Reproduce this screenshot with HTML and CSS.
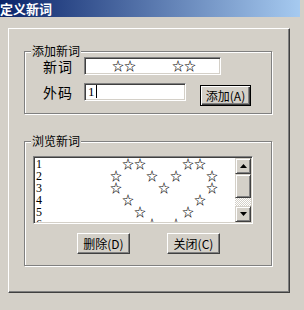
FILE: index.html
```html
<!DOCTYPE html>
<html lang="zh-CN">
<head>
  <meta charset="UTF-8">
  <title>定义新词</title>
  <link rel="stylesheet" href="styles.css">
</head>
<body>
  <div class="titlebar">定义新词</div>

  <div class="frame">
    <!-- 添加新词 -->
    <div class="group group-add">
      <span class="legend">添加新词</span>
      <div class="row">
        <span class="label">新词</span>
        <div class="field field-word stars">☆☆　　　☆☆</div>
      </div>
      <div class="row">
        <span class="label">外码</span>
        <div class="field field-code">1<span class="caret"></span></div>
        <button class="btn btn-default">添加(A)</button>
      </div>
    </div>

    <!-- 浏览新词 -->
    <div class="group group-browse">
      <span class="legend">浏览新词</span>
      <div class="listbox">
        <div class="list-rows">
          <div class="list-row"><span class="num">1</span><span class="stars">　☆☆　　　☆☆</span></div>
          <div class="list-row"><span class="num">2</span><span class="stars">☆　　☆　☆　　☆</span></div>
          <div class="list-row"><span class="num">3</span><span class="stars">☆　　　☆　　　☆</span></div>
          <div class="list-row"><span class="num">4</span><span class="stars">　☆　　　　　☆</span></div>
          <div class="list-row"><span class="num">5</span><span class="stars">　　☆　　　☆</span></div>
          <div class="list-row"><span class="num">6</span><span class="stars">　　　☆　☆</span></div>
          <div class="list-row"><span class="num">7</span><span class="stars">　　　　☆</span></div>
        </div>
        <div class="scrollbar">
          <div class="sb-btn">
            <svg width="7" height="4" viewBox="0 0 7 4"><polygon points="3.5,0 7,4 0,4" fill="#000"/></svg>
          </div>
          <div class="sb-thumb"></div>
          <div class="sb-track"></div>
          <div class="sb-btn">
            <svg width="7" height="4" viewBox="0 0 7 4"><polygon points="0,0 7,0 3.5,4" fill="#000"/></svg>
          </div>
        </div>
      </div>
      <div class="actions">
        <button class="btn">删除(D)</button>
        <button class="btn">关闭(C)</button>
      </div>
    </div>
  </div>
</body>
</html>
```

FILE: styles.css
```css
body {
  margin: 0;
  width: 304px;
  height: 310px;
  overflow: hidden;
  background: #d4d0c8;
  color: #000;
  font-family: "Noto Sans CJK SC", sans-serif;
  font-size: 12px;
}

.titlebar {
  height: 17px;
  line-height: 17px;
  margin-right: 4px;
  background: linear-gradient(to right, #0a246a, #a6caf0);
  color: #fff;
  font-size: 13px;
  font-weight: bold;
  white-space: nowrap;
}

.frame {
  box-sizing: border-box;
  width: 282px;
  height: 265px;
  margin: 11px 0 0 8px;
  padding: 22px 0 0 15px;
  border: 1px solid;
  border-color: #fff #404040 #404040 #fff;
  box-shadow: inset -1px -1px 0 #808080;
}

/* etched group box */
.group {
  box-sizing: border-box;
  width: 248px;
  border: 1px solid #808080;
  box-shadow: inset 1px 1px 0 #fff, 1px 1px 0 #fff;
  padding-left: 6px;
}
.legend {
  display: block;
  width: fit-content;
  height: 14px;
  line-height: 14px;
  margin-top: -8px;
  padding: 0 1px;
  background: #d4d0c8;
}

.group-add { padding-bottom: 12px; }
.group-add .legend { margin-bottom: -1px; }
.row {
  display: flex;
  align-items: center;
  height: 18px;
  padding-left: 12px;
}
.row + .row { margin-top: 8px; }
.label {
  width: 41px;
  font-size: 14px;
  letter-spacing: 1px;
}

/* sunken edit field */
.field {
  box-sizing: border-box;
  height: 18px;
  line-height: 16px;
  background: #fff;
  border: 1px solid;
  border-color: #808080 #fff #fff #808080;
  box-shadow: inset 1px 1px 0 #404040, inset -1px -1px 0 #d4d0c8;
  white-space: nowrap;
  overflow: hidden;
}
.field-word { width: 137px; padding-left: 27px; }
.field-code {
  width: 102px;
  padding-left: 3px;
  font-family: "Liberation Serif", serif;
  font-size: 13px;
}
.caret {
  display: inline-block;
  width: 1px;
  height: 13px;
  margin-left: 1px;
  vertical-align: -2px;
  background: #000;
}

.btn {
  box-sizing: border-box;
  width: 53px;
  height: 21px;
  padding: 0;
  background: #d4d0c8;
  color: #000;
  font-family: "Noto Sans CJK SC", sans-serif;
  font-size: 12px;
  border: 1px solid;
  border-color: #fff #404040 #404040 #fff;
  box-shadow: inset -1px -1px 0 #808080;
}
.btn-default {
  width: 51px;
  align-self: flex-start;
  margin: 2px 0 0 14px;
  border-color: #000;
  box-shadow: inset 1px 1px 0 #fff, inset -1px -1px 0 #404040, inset -2px -2px 0 #808080;
}

.group-browse {
  margin-top: 27px;
  padding-bottom: 11px;
}
.group-browse .legend { margin-bottom: 8px; }

.listbox {
  box-sizing: border-box;
  display: flex;
  width: 220px;
  height: 68px;
  margin-left: 2px;
  padding: 1px;
  background: #fff;
  border: 1px solid;
  border-color: #808080 #fff #fff #808080;
  box-shadow: inset 1px 1px 0 #404040, inset -1px -1px 0 #d4d0c8;
}
.list-rows {
  flex: 1;
  overflow: hidden;
}
.list-row {
  display: flex;
  height: 12px;
  line-height: 12px;
  white-space: nowrap;
}
.num {
  width: 74px;
  padding-left: 1px;
  font-family: "Liberation Serif", serif;
  font-size: 12px;
}
.stars {
  font-size: 12px;
  font-weight: bold;
}

.scrollbar {
  display: flex;
  flex-direction: column;
  width: 16px;
}
.sb-btn, .sb-thumb {
  box-sizing: border-box;
  background: #d4d0c8;
  border: 1px solid;
  border-color: #d4d0c8 #404040 #404040 #d4d0c8;
  box-shadow: inset 1px 1px 0 #fff, inset -1px -1px 0 #808080;
}
.sb-btn {
  height: 16px;
  display: flex;
  align-items: center;
  justify-content: center;
}
.sb-thumb { height: 24px; }
.sb-track {
  height: 8px;
  background: repeating-conic-gradient(#fff 0 25%, #d4d0c8 0 50%) 0 0 / 2px 2px;
}

.actions {
  display: flex;
  gap: 37px;
  margin-top: 9px;
  padding-left: 46px;
}
```
